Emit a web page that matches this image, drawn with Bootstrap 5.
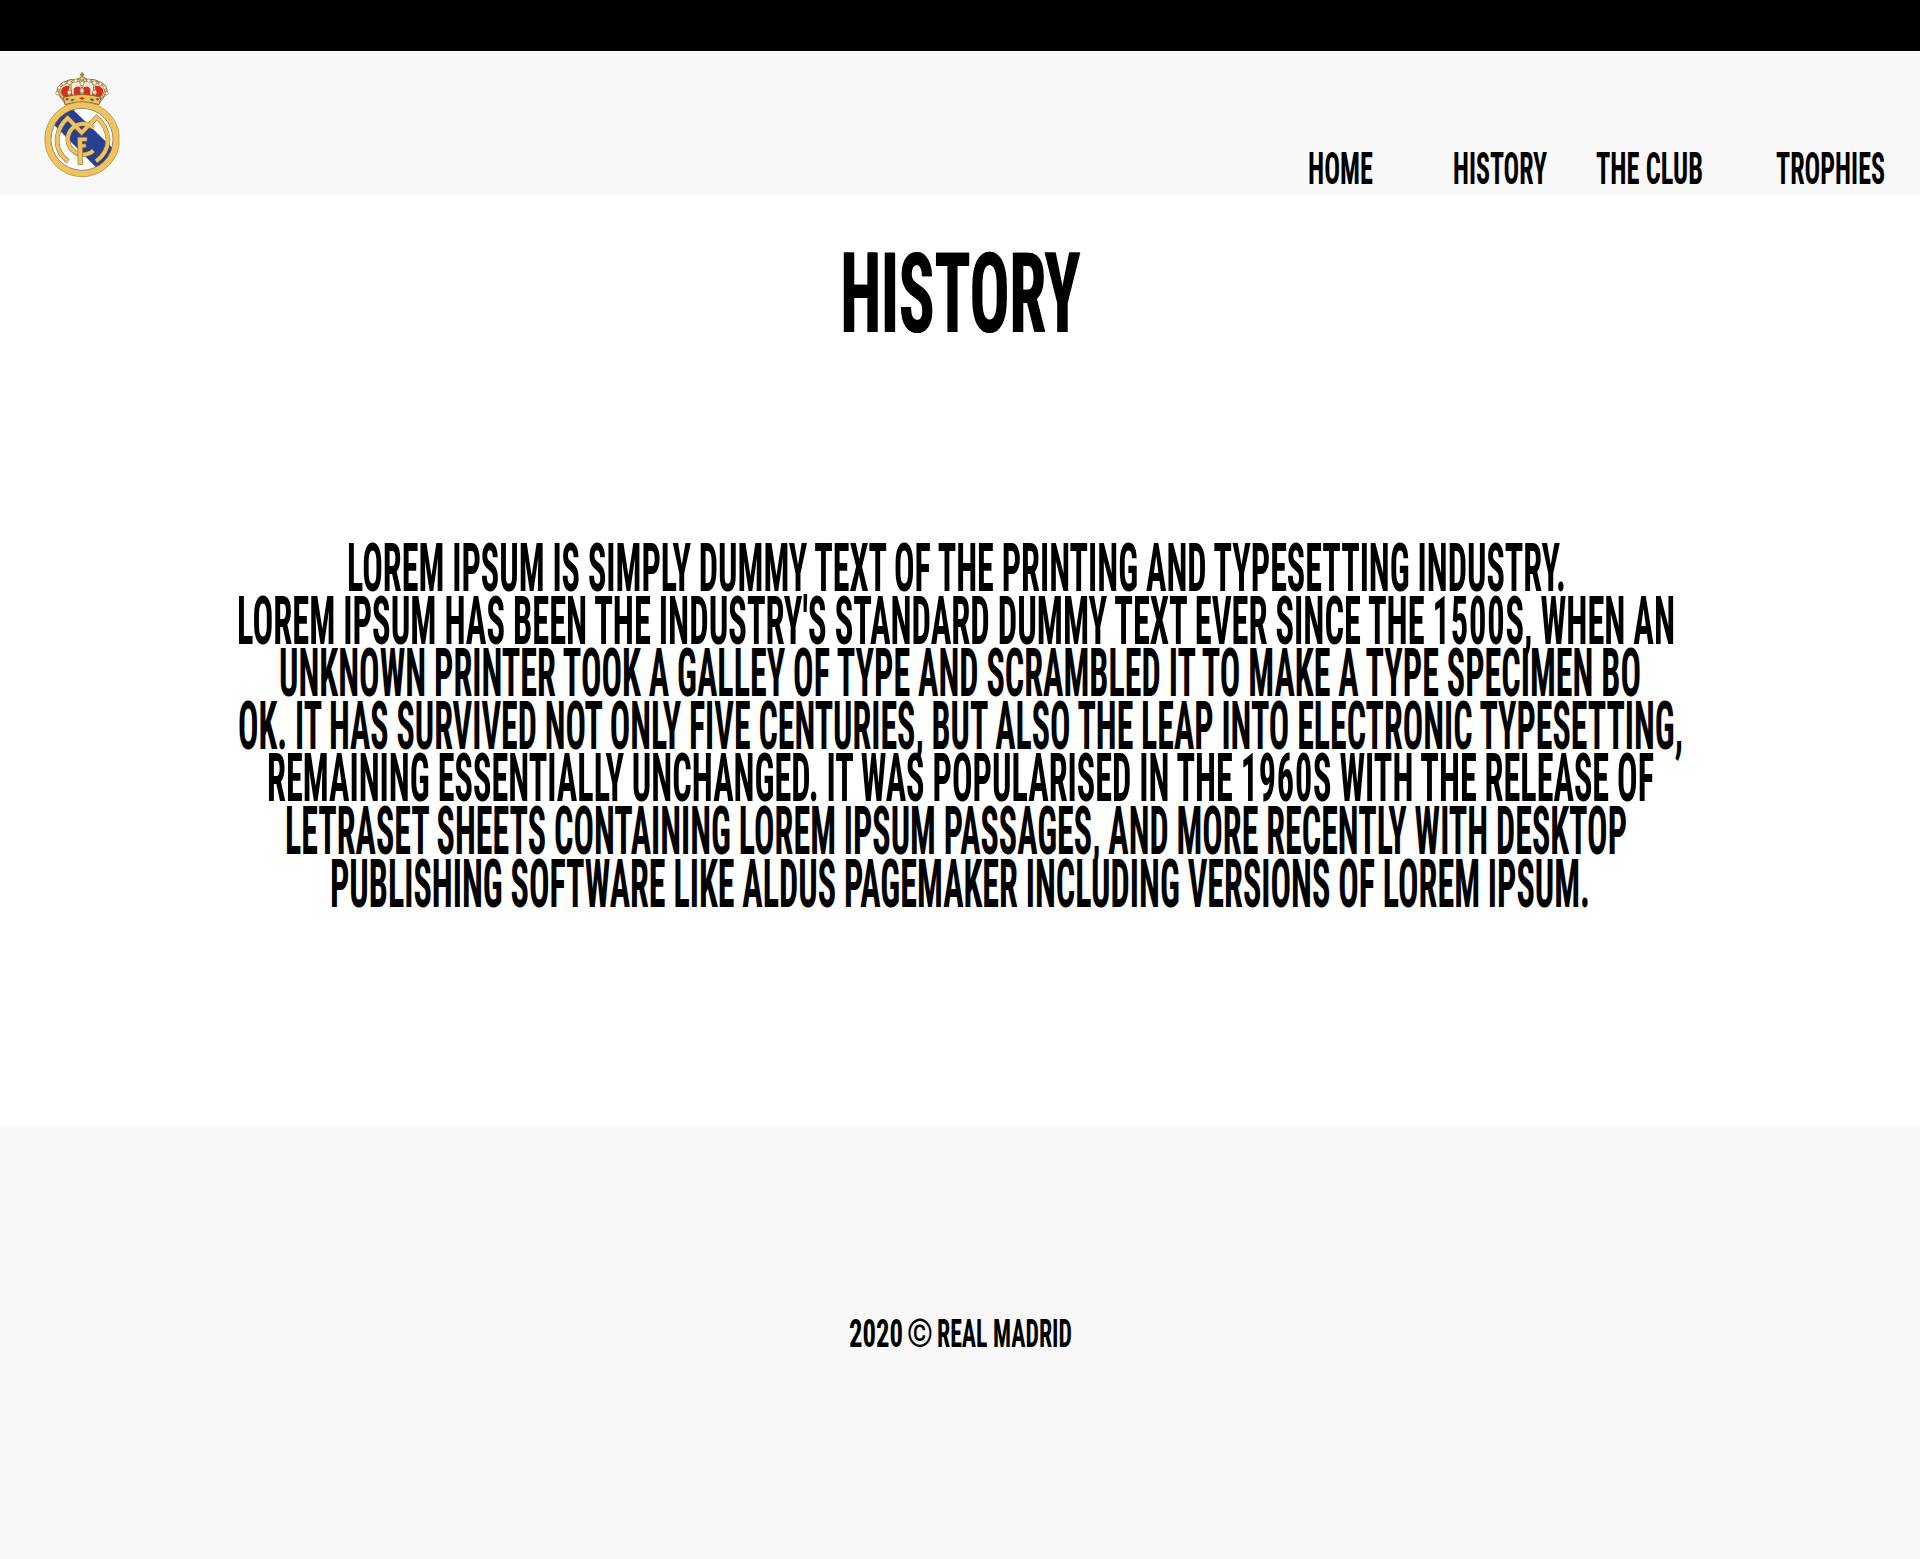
<!DOCTYPE html>
<html lang="en">
<head>
<meta charset="utf-8">
<meta name="viewport" content="width=device-width, initial-scale=1">
<title>Real Madrid - History</title>
<link href="https://cdn.jsdelivr.net/npm/bootstrap@5.3.0/dist/css/bootstrap.min.css" rel="stylesheet">
<style>
body{font-family:Roboto,"Liberation Sans",sans-serif;font-stretch:75%;font-weight:700;color:#000;background:#fff;text-transform:uppercase;overflow-x:hidden}
.topline{height:51px;background:#000}
.site-head{height:144px;background:#f8f8f8;padding:9px 0 0 30px}
.crest{width:110px;height:130px;display:block;flex:none}
.menu{font-size:43.6px;line-height:44px;padding:88px 35px 0 0}
.menu a{color:#000;text-decoration:none;display:block}
.menu li:nth-child(2){margin-left:80px}
.menu li:nth-child(3){margin-left:49px}
.menu li:nth-child(4){margin-left:73px}
.fit{display:inline-block;white-space:nowrap;transform-origin:0 50%}
.story{height:932px;padding-top:41px}
.story h1{font-size:110.5px;line-height:116px;font-weight:700;margin:0 0 190px;padding-right:1px;text-shadow:1.5px 0 #000}
.story p{font-size:67.5px;line-height:52.6px;margin:0}
.textline{display:flex;justify-content:center;height:52.6px}
.trail{padding-right:8px}
.year{letter-spacing:1.6px}
.site-foot{height:432px;background:#f8f8f8;font-size:38.7px;line-height:46px;padding-top:184px}
</style>
<script src="https://cdn.jsdelivr.net/npm/bootstrap@5.3.0/dist/js/bootstrap.bundle.min.js"></script>
</head>
<body>
<div class="topline"></div>
<header class="site-head d-flex justify-content-between align-items-start">
<a href="#" aria-label="Real Madrid">
<svg class="crest" viewBox="0 0 330 390">
<defs><clipPath id="disc"><circle cx="156" cy="238" r="94"/></clipPath></defs>
<path d="M105 130 L81 98 Q79 78 101 68 Q120 54 137 60 L156 50 L176 60 Q196 54 213 70 Q234 80 231 98 L208 130Z" fill="#f5eee0" stroke="#8d7442" stroke-width="3"/>
<path d="M103 112 Q85 94 99 82 Q110 74 123 80 L128 107Z M131 105 V86 Q142 74 152 83 V105Z M160 105 V83 Q171 74 181 86 V105Z M185 107 L191 80 Q205 73 216 84 Q227 96 209 112Z" fill="#dc2a1e"/>
<path d="M105 119 Q78 93 90 79 Q106 62 121 70 L118 106 M207 119 Q236 93 224 79 Q207 62 192 70 L195 106 M121 70 Q142 52 156 68 Q171 52 192 70 M156 68 V105" fill="none" stroke="#8d7442" stroke-width="8"/>
<path d="M105 119 Q78 93 90 79 Q106 62 121 70 L118 106 M207 119 Q236 93 224 79 Q207 62 192 70 L195 106 M121 70 Q142 52 156 68 Q171 52 192 70 M156 68 V105" fill="none" stroke="#f3d387" stroke-width="4.5" stroke-dasharray="6 2"/>
<g fill="#fff7df" stroke="#9b8048" stroke-width="2"><circle cx="82" cy="100" r="5"/><circle cx="88" cy="83" r="5"/><circle cx="101" cy="71" r="5"/><circle cx="118" cy="68" r="6"/><circle cx="137" cy="62" r="5"/><circle cx="156" cy="70" r="6"/><circle cx="176" cy="62" r="5"/><circle cx="194" cy="69" r="6"/><circle cx="211" cy="72" r="5"/><circle cx="224" cy="83" r="5"/><circle cx="230" cy="100" r="5"/><circle cx="118" cy="97" r="6"/><circle cx="156" cy="92" r="6"/><circle cx="194" cy="97" r="6"/></g>
<path d="M156 37 V58 M150 44 H162" stroke="#a27c31" stroke-width="5"/><circle cx="156" cy="55" r="6" fill="#edc058" stroke="#91733a" stroke-width="2"/>
<path d="M100 112 Q156 95 213 112 L207 134 Q156 117 105 134Z" fill="#efc25b" stroke="#80693b" stroke-width="3"/>
<path d="M120 121 L127 116 L135 119 L127 124Z M178 118 L186 115 L194 120 L186 124Z" fill="#248159"/>
<path d="M106 117 L112 113 L117 117 L110 122Z M147 115 L156 111 L165 115 L156 120Z M197 117 L203 113 L208 117 L202 122Z" fill="#cf3928"/>
<path d="M267 220 V256 A112 112 0 1 1 267 220Z" fill="#f0c35c" stroke="#9d8247" stroke-width="2"/>
<circle cx="156" cy="238" r="94" fill="#fff"/>
<path clip-path="url(#disc)" d="M66 188 L116 136 L262 278 L209 333Z" fill="#293f91"/>
<circle cx="156" cy="238" r="93" fill="none" stroke="#857044" stroke-width="2.5"/>
<g fill="none" stroke-linejoin="miter">
<g stroke="#857044" stroke-width="14"><path d="M190 203 A46 46 0 1 0 190 272"/><path d="M115 304 Q76 277 82 229 Q88 196 113 174 L155 218 L200 172 Q231 198 234 239 Q233 280 198 304"/></g>
<g stroke="#f0c35c" stroke-width="11"><path d="M190 203 A46 46 0 1 0 190 272"/><path d="M115 304 Q76 277 82 229 Q88 196 113 174 L155 218 L200 172 Q231 198 234 239 Q233 280 198 304"/></g>
</g>
<path d="M143 232 H171 V244 H157 V252 H168 V263 H158 V314 H144Z" fill="#f0c35c" stroke="#857044" stroke-width="2"/>
</svg></a>
<nav><ul class="menu list-unstyled d-flex m-0">
<li><a href="#"><span class="fit" data-width="65">Home</span></a></li>
<li><a href="#"><span class="fit" data-width="94">History</span></a></li>
<li><a href="#"><span class="fit" data-width="107">The Club</span></a></li>
<li><a href="#"><span class="fit" data-width="109">Trophies</span></a></li>
</ul></nav>
</header>
<main class="story text-center">
<h1><span class="fit" data-width="240">History</span></h1>
<p>
<span class="textline trail"><span class="fit" data-width="1219">Lorem Ipsum is simply dummy text of the printing and typesetting industry.</span></span>
<span class="textline trail"><span class="fit" data-width="1438">Lorem Ipsum has been the industry's standard dummy text ever since the <span class="year">1500</span>s, when an</span></span>
<span class="textline"><span class="fit" data-width="1362">unknown printer took a galley of type and scrambled it to make a type specimen bo</span></span>
<span class="textline"><span class="fit" data-width="1445">ok. It has survived not only five centuries, but also the leap into electronic typesetting,</span></span>
<span class="textline"><span class="fit" data-width="1387">remaining essentially unchanged. It was popularised in the <span class="year">1960</span>s with the release of</span></span>
<span class="textline trail"><span class="fit" data-width="1342">Letraset sheets containing Lorem Ipsum passages, and more recently with desktop</span></span>
<span class="textline"><span class="fit" data-width="1260">publishing software like Aldus PageMaker including versions of Lorem Ipsum.</span></span>
</p>
</main>
<footer class="site-foot d-flex justify-content-center"><span class="fit" data-width="54">2020</span><span class="fit ms-1" data-width="26">©</span><span class="fit ms-1" data-width="135">Real Madrid</span></footer>
<script>
// Condense each label to its set width, and let the layout box follow.
document.querySelectorAll('.fit').forEach(function(el){
  el.style.flex='none';
  var natural=el.getBoundingClientRect().width, w=+el.dataset.width;
  el.style.transform='scaleX('+w/natural+')';
  el.style.marginRight=(w-natural)+'px';
});
</script>
</body>
</html>
